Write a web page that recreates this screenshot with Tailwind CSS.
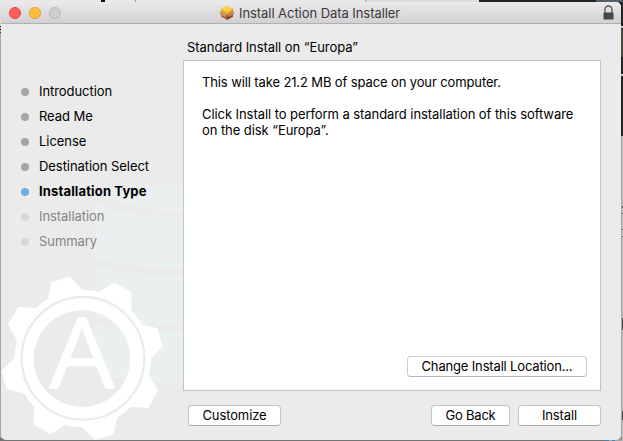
<!DOCTYPE html>
<html lang="en">
<head>
<meta charset="utf-8">
<title>Install Action Data Installer</title>
<script src="https://cdn.jsdelivr.net/npm/@tailwindcss/browser@4"></script>
</head>
<body class="relative h-[441px] w-[623px] overflow-hidden bg-[#a5a5a5] font-['Inter','Liberation_Sans',sans-serif] text-[13px] leading-4 text-black">
  <!-- Desktop edges visible around the window -->
  <svg class="absolute inset-0" width="623" height="441" aria-hidden="true">
    <path fill="#e9e9e9" d="M0 0h365v8H0z"/>
    <path fill="#dcdcdc" d="M365 0h114v8H365z"/>
    <path fill="#999" d="M365 0h1v3h-1z"/>
    <path fill="#111" d="M101 0h4v3h-4z"/>
    <path fill="#999" d="M135 0h1v3h-1z"/>
    <path fill="#24231f" d="M479 0h144v136H479z"/>
    <path fill="#526467" d="M596 0h27v2h-27z"/>
    <path fill="#c8c8c8" d="M620 26h3v2h-3zM620 74h3v2h-3z"/>
    <path fill="#4a473e" d="M621 29h2v28h-2z"/>
    <path fill="#bcbcbc" d="M622 136h1v305h-1z"/>
    <path fill="#ddd" d="M0 6h1v20H0z"/>
    <path fill="#222" d="M0 26h1v1H0zM0 29h1v1H0zM0 32h1v1H0z"/>
    <path fill="#444" d="M622 206h1v2h-1zM622 213h1v1h-1zM622 229h1v1h-1zM622 236h1v1h-1zM622 318h1v12h-1zM622 411h1v9h-1z"/>
    <path fill="#747474" d="M0 438h605v3H0z"/>
    <path fill="#3a86bd" d="M605 439h4v2h-4zM612 438h3v3h-3zM618 438h4v1h-4z"/>
  </svg>

  <main class="relative ml-px mt-[2px] flex h-[438px] w-[620px] flex-col overflow-hidden rounded-[5px] bg-[#ebebeb]">
    <header class="flex h-[22px] shrink-0 items-center border-b border-[#b1b0b1] bg-linear-to-b from-[#ebe9eb] to-[#d2d0d2] pl-2 pr-[7px]">
      <div class="flex w-[210px] gap-2">
        <span class="size-3 rounded-full border border-[#e2463f] bg-[#ff5f57]"></span>
        <span class="size-3 rounded-full border border-[#dfa023] bg-[#ffbd3f]"></span>
        <span class="size-3 rounded-full border border-[#b9b8b9] bg-[#cfcecf]"></span>
      </div>
      <svg class="shrink-0" width="16" height="16" viewBox="0 0 16 16" aria-hidden="true">
        <path fill="#a8683c" d="M2 6l6 4 6-4v5.500L8 15l-6-3.500z"/>
        <path fill="#7f4a2c" d="M8 10l6-4v5.500L8 15z"/>
        <path fill="#e9ae2c" d="M1.500 4.500L7 .8l7 2.700v3L8 9.500 2 7z"/>
        <path fill="#fbd04c" d="M2 4.200L7.200 1 14 3.500 8.800 7z"/>
        <path fill="#d0935f" d="M2 6l6 3.500L6 12 .5 9z"/>
        <path fill="#c58556" d="M14 5.500L15.500 8.500 10 12 8 9.500z"/>
      </svg>
      <h1 class="ml-[4px] whitespace-nowrap text-[13px] tracking-[-0.06px] text-[#3b3a3b]">Install Action Data Installer</h1>
      <svg class="ml-auto" width="11" height="15" viewBox="0 0 11 15" aria-hidden="true">
        <path fill="none" stroke="#555356" stroke-width="1.300" d="M2 8V4.500a3.500 3.500 0 0 1 7 0V8"/>
        <rect y="7.500" x=".5" width="10" height="7" rx=".6" fill="#474548"/>
      </svg>
    </header>

    <svg class="absolute left-[-1px] top-[178px]" width="183" height="261" viewBox="0 -240 549 783" aria-hidden="true">
      <g fill="#eaefef">
        <path d="M320 -215Q410 -226 549 -225V-144Q390 -146 300 -200Z"/>
        <path d="M285 -170Q370 -132 549 -130V24Q390 22 285 -2Z"/>
        <path d="M285 20Q390 44 549 45V198Q390 196 285 172Z"/>
        <path d="M285 192Q390 216 549 218V371Q390 369 285 345Z"/>
      </g>
      <path fill="#fff" fill-rule="evenodd" d="M153 67L210 50L247 90Q274 90 298 96L343 67L394 96V152Q414 171 428 195L473 205L488 261L453 295Q453 322 446 346L475 390L445 444L393 440Q375 459 352 472L341 524L285 539L247 502Q220 502 195 495L152 522L100 492L102 440Q85 423 72 400L20 388L4 332L44 295Q44 267 50 240L24 192L55 141L108 144Q124 128 144 117ZM101 296a145 145 0 1 0 290 0a145 145 0 1 0-290 0Z"/>
      <circle cx="249" cy="295" r="184" fill="none" stroke="#ebebeb" stroke-width="7"/>
      <text x="147" y="384" textLength="198" lengthAdjust="spacingAndGlyphs" fill="#fff" stroke="#fff" stroke-width="2" class="font-['Open_Sans',sans-serif] text-[294px]">A</text>
    </svg>

    <div class="relative flex grow">
      <nav class="w-[182px] shrink-0 pt-[59px] pl-5">
        <ol class="flex flex-col gap-[9px] whitespace-nowrap tracking-[-0.06px]">
          <li class="flex items-center gap-[10px]"><span class="mt-[2px] size-2 rounded-full bg-[#a5a5a5]"></span>Introduction</li>
          <li class="flex items-center gap-[10px]"><span class="mt-[2px] size-2 rounded-full bg-[#a5a5a5]"></span>Read Me</li>
          <li class="flex items-center gap-[10px]"><span class="mt-[2px] size-2 rounded-full bg-[#a5a5a5]"></span>License</li>
          <li class="flex items-center gap-[10px]"><span class="mt-[2px] size-2 rounded-full bg-[#a5a5a5]"></span>Destination Select</li>
          <li class="flex items-center gap-[10px] font-bold tracking-[0.15px]"><span class="mt-[2px] size-2 rounded-full bg-[#68afeb]"></span>Installation Type</li>
          <li class="flex items-center gap-[10px] text-[#858585]"><span class="mt-[2px] size-2 rounded-full bg-[#d8d8d8]"></span>Installation</li>
          <li class="flex items-center gap-[10px] text-[#858585]"><span class="mt-[2px] size-2 rounded-full bg-[#d8d8d8]"></span>Summary</li>
        </ol>
      </nav>
      <section class="flex w-[418px] flex-col pt-[15px]">
        <h2 class="ml-1 tracking-[-0.06px]">Standard Install on “Europa”</h2>
        <div class="mt-[5px] flex h-[331px] flex-col border border-[#c5c5c5] bg-white pl-[18px] pr-[13px] pt-[13px] pb-[13px]">
          <p class="whitespace-nowrap tracking-[-0.12px]">This will take 21.2 MB of space on your computer.</p>
          <p class="mt-4 whitespace-nowrap tracking-[-0.07px]">Click Install to perform a standard installation of this software<br>on the disk “Europa”.</p>
          <button class="mt-auto h-[21px] w-[180px] self-end rounded-[4px] border border-[#cfcfcf] border-b-[#b5b5b5] bg-white pb-[2px] tracking-[-0.16px]">Change Install Location...</button>
        </div>
        <footer class="mt-[14px] flex pl-[5px]">
          <button class="h-[21px] w-[93px] rounded-[4px] border border-[#c4c4c4] border-b-[#acacac] bg-white pb-[2px] tracking-[-0.1px]">Customize</button>
          <button class="ml-auto h-[21px] w-[79px] rounded-[4px] border border-[#c4c4c4] border-b-[#acacac] bg-white pb-[2px] tracking-[-0.2px]">Go Back</button>
          <button class="ml-2 h-[21px] w-[83px] rounded-[4px] border border-[#c4c4c4] border-b-[#acacac] bg-white pb-[2px] tracking-[-0.1px]">Install</button>
        </footer>
      </section>
    </div>
  </main>
</body>
</html>
